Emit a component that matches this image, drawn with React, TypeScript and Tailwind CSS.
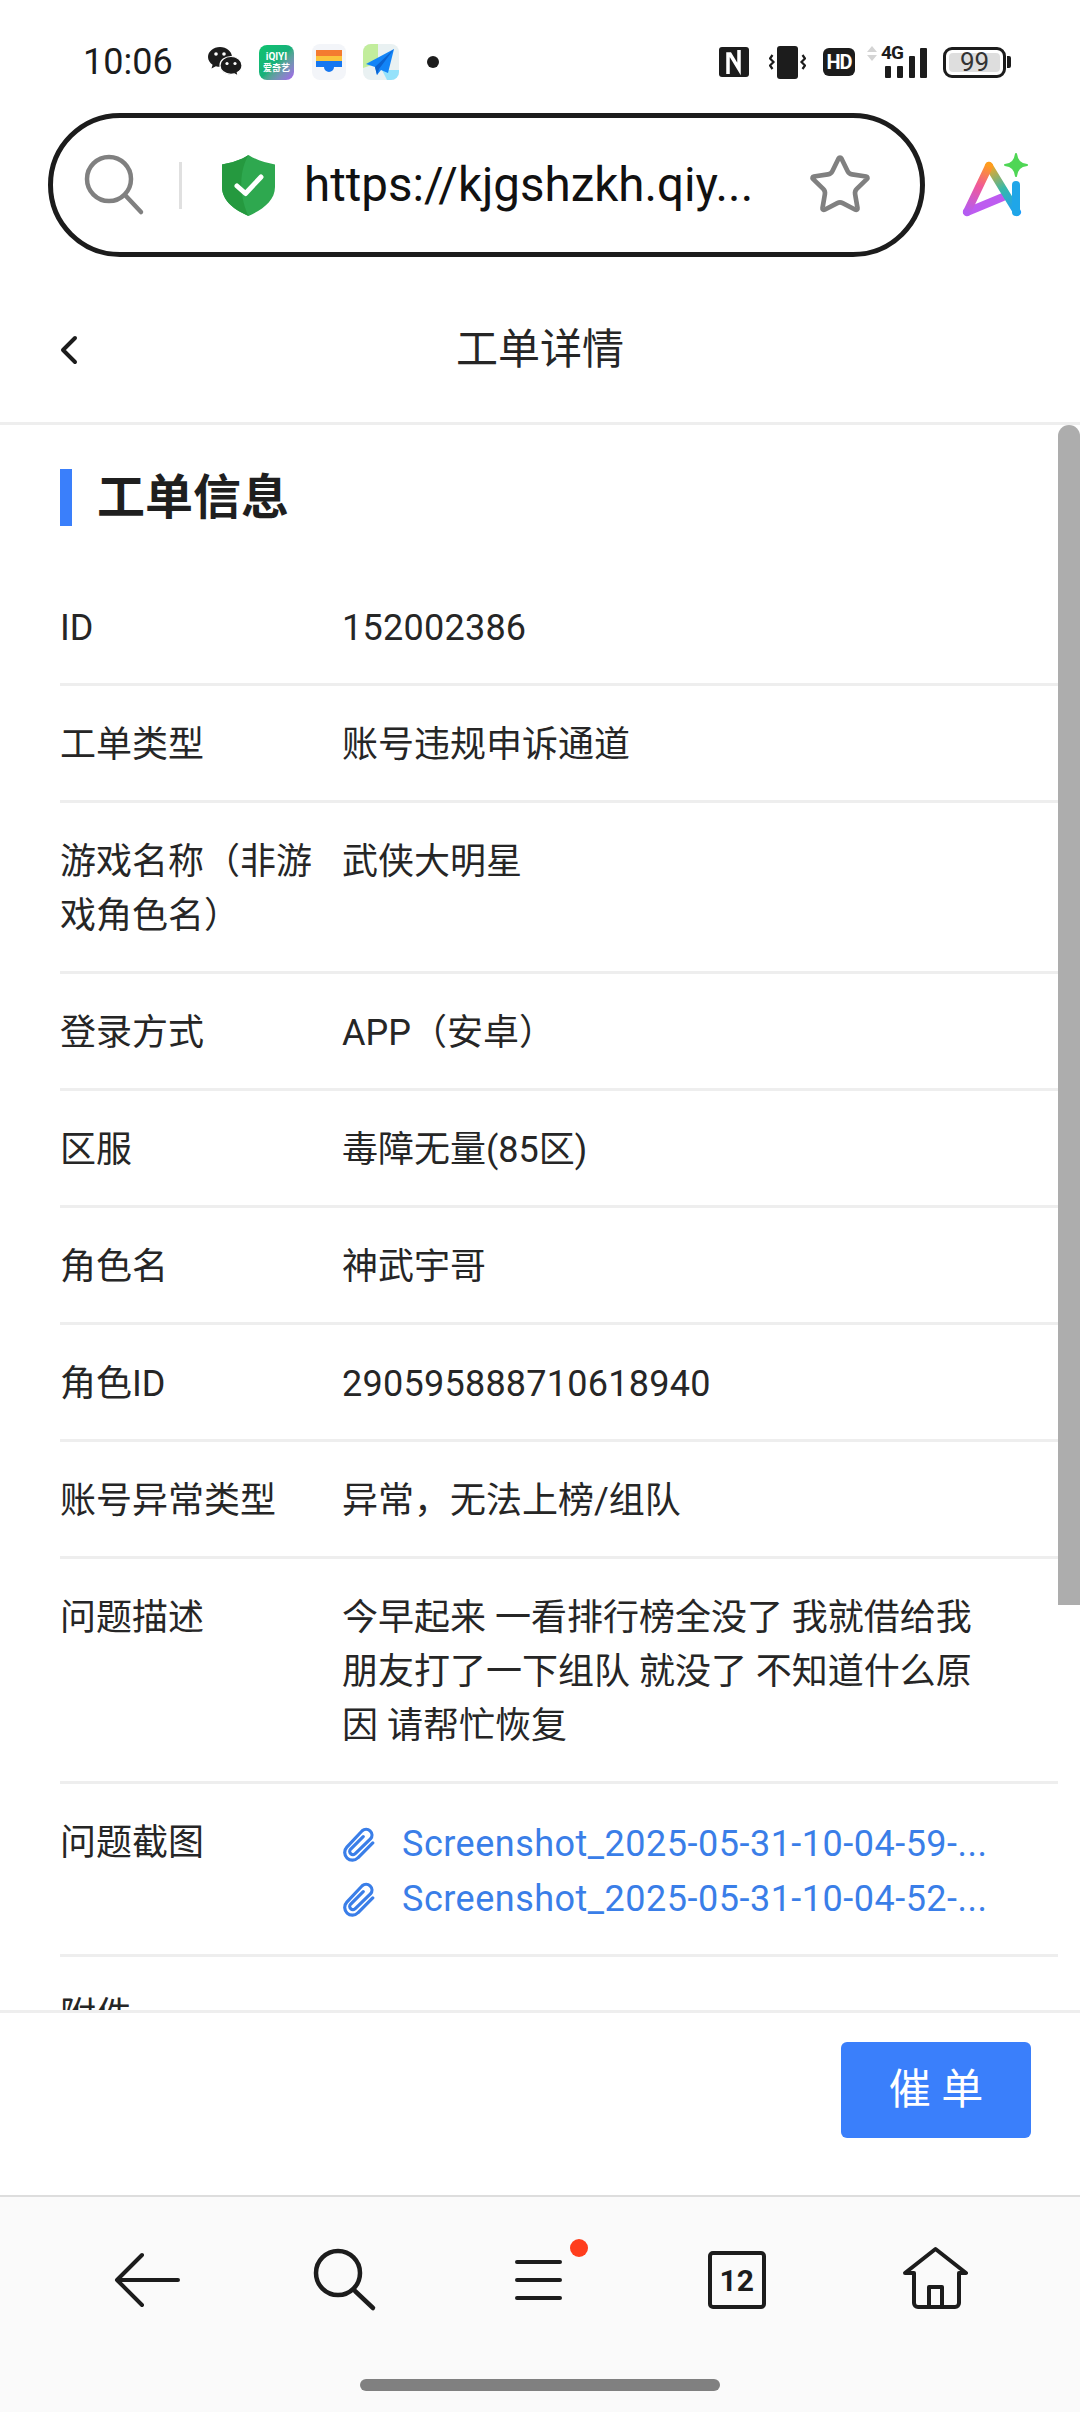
import React from 'react';
import { ChevronLeft, Star } from 'lucide-react';

type Row = { label: string; value: string; latin?: boolean };

const rows: Row[] = [
  { label: 'ID', value: '152002386', latin: true },
  { label: '工单类型', value: '账号违规申诉通道' },
  { label: '游戏名称（非游戏角色名）', value: '武侠大明星' },
  { label: '登录方式', value: 'APP（安卓）' },
  { label: '区服', value: '毒障无量(85区)' },
  { label: '角色名', value: '神武宇哥' },
  { label: '角色ID', value: '290595888710618940', latin: true },
  { label: '账号异常类型', value: '异常，无法上榜/组队' },
  { label: '问题描述', value: '今早起来 一看排行榜全没了 我就借给我朋友打了一下组队 就没了 不知道什么原因 请帮忙恢复' },
];

const files = ['Screenshot_2025-05-31-10-04-59-...', 'Screenshot_2025-05-31-10-04-52-...'];

const Clip = () => (
  <svg width="32" height="36" viewBox="0 0 30 34" fill="none" stroke="#3a7ee8" strokeWidth="3" strokeLinecap="round" className="shrink-0 ml-[1px]">
    <path d="M28 16 L14 30 a7.2 7.2 0 0 1 -10.5 -10 L18 4.500 a5.500 5.500 0 0 1 8 7.500 L11.500 26 a3 3 0 0 1 -4.500 -4 L19 10" />
  </svg>
);

const StatusBar = () => (
  <div className="h-[113px] pt-[11px] flex items-center shrink-0 box-border">
    <span className="ml-[83px] w-[90px] text-[36px] leading-none text-[#1c1c1c]">10:06</span>
    {/* wechat */}
    <svg width="34" height="30" viewBox="0 0 34 30" className="ml-[35px]">
      <path d="M12 0C5.400 0 0 4.500 0 10c0 3.200 1.800 5.900 4.600 7.700L3.500 21.500l4.400-2.300c1.300.4 2.700.6 4.100.6C18.600 19.800 24 15.500 24 10 24 4.500 18.600 0 12 0z" fill="#1c1c1c" />
      <path d="M23 9.500c-6 0-11 3.900-11 8.900 0 5 5 9 11 9 1.200 0 2.300-.2 3.400-.5l3.800 2.100-.9-3.400c2.800-1.700 4.700-4.300 4.700-7.200 0-5-4.900-8.900-11-8.900z" fill="#1c1c1c" stroke="#fff" strokeWidth="1.200" />
      <circle cx="8" cy="7" r="1.800" fill="#fff" />
      <circle cx="16" cy="7" r="1.800" fill="#fff" />
      <circle cx="19" cy="16.500" r="1.600" fill="#fff" />
      <circle cx="27" cy="16.500" r="1.600" fill="#fff" />
    </svg>
    {/* iqiyi */}
    <div className="ml-[17px] w-[35px] h-[35px] rounded-[8px] bg-gradient-to-br from-[#0fc46e] via-[#17b07a] to-[#a45cf0] flex flex-col items-center justify-center text-white font-bold leading-none">
      <span className="text-[10px] leading-[12px]">iQIYI</span>
      <span className="text-[9px] leading-[10px]">爱奇艺</span>
    </div>
    {/* wallet */}
    <svg width="34" height="36" viewBox="0 0 34 36" className="ml-[18px]">
      <rect width="34" height="36" rx="8" fill="#f3f5f9" />
      <rect x="4" y="6" width="26" height="6" fill="#f47b30" />
      <rect x="4" y="12" width="26" height="5" fill="#fbc43c" />
      <path d="M4 17h26v6h-8a5 5 0 0 1-10 0H4z" fill="#1677f0" />
    </svg>
    {/* map */}
    <svg width="36" height="36" viewBox="0 0 36 36" className="ml-[17px]">
      <rect width="36" height="36" rx="8" fill="#e9f1f2" />
      <path d="M8 0h7v19L0 24V8a8 8 0 0 1 8-8z" fill="#c2ed9c" />
      <path d="M19 26h17v2a8 8 0 0 1-8 8h-4z" fill="#95e2fb" />
      <path d="M31 5L3 20l9 3 2 8 4-5 7 3z" fill="#1284f7" />
      <path d="M31 5L12 23l2 8 2-6z" fill="#0b62cf" />
    </svg>
    <span className="ml-[28px] w-[12px] h-[12px] rounded-full bg-[#1c1c1c]" />

    <div className="ml-auto mr-[69px] flex items-center">
      {/* nfc */}
      <svg width="30" height="30" viewBox="0 0 30 30">
        <rect width="30" height="30" rx="3" fill="#1c1c1c" />
        <path d="M9 27V7h2l9 15V3" fill="none" stroke="#fff" strokeWidth="3.500" />
      </svg>
      {/* vibrate */}
      <svg width="37" height="33" viewBox="0 0 37 33" className="ml-[20px]">
        <rect x="8" y="0" width="21" height="33" rx="3" fill="#1c1c1c" />
        <path d="M3.500 9l-2.500 3.500L4.500 16 1 19.500 3.500 23" fill="none" stroke="#1c1c1c" strokeWidth="2.200" />
        <path d="M33.500 9l2.500 3.500L32.500 16l3.500 3.500L33.500 23" fill="none" stroke="#1c1c1c" strokeWidth="2.200" />
      </svg>
      <div className="ml-[17px] w-[32px] h-[28px] rounded-[6px] bg-[#1c1c1c] text-white text-[20px] font-bold leading-[28px] text-center tracking-[-1px]">HD</div>
      {/* signal */}
      <div className="relative ml-[12px] w-[60px] h-[32px]">
        <svg width="60" height="32" viewBox="0 0 60 32">
          <path d="M5 0l5 6H0zM5 15L0 9h10z" fill="#d4d4d4" />
          <rect x="18" y="20" width="6" height="12" rx="1" fill="#1c1c1c" />
          <rect x="30" y="20" width="6" height="12" rx="1" fill="#1c1c1c" />
          <rect x="42" y="10" width="6" height="22" rx="1" fill="#1c1c1c" />
          <rect x="53" y="2" width="7" height="30" rx="1" fill="#1c1c1c" />
        </svg>
        <span className="absolute left-[14px] top-[-3px] text-[19px] leading-[20px] font-bold text-[#1c1c1c] tracking-[-1px]">4G</span>
      </div>
      <div className="ml-[16px] w-[63px] h-[31px] box-border border-[3px] border-[#1c1c1c] rounded-[9px] p-[3px]">
        <div className="h-full rounded-[4px] bg-[#dedede] text-[26px] leading-[19px] text-center text-[#333]">99</div>
      </div>
      <span className="ml-[1px] w-[4px] h-[12px] rounded-r-[2px] bg-[#1c1c1c]" />
    </div>
  </div>
);

const UrlRow = () => (
  <div className="flex items-center shrink-0 h-[144px]">
    <div className="ml-[48px] w-[877px] h-[144px] box-border border-[5px] border-[#1c1c1c] rounded-full flex items-center">
      <svg width="62" height="62" viewBox="0 0 62 62" className="ml-[31px] shrink-0" fill="none" stroke="#808080" strokeWidth="4.500" strokeLinecap="round">
        <circle cx="25" cy="25" r="22" />
        <path d="M41 41L57 58" />
      </svg>
      <span className="ml-[33px] w-[3px] h-[47px] bg-[#e0e0e0] shrink-0" />
      <svg width="55" height="61" viewBox="0 0 55 61" className="ml-[39px] shrink-0">
        <path d="M27.500 0C35 5 45 8 54 9.500V32C54 46 41 55 27.500 61 14 55 1 46 1 32V9.500C10 8 20 5 27.500 0z" fill="#2ea84f" />
        <path d="M27.500 0C20 5 10 8 1 9.500V32C1 46 14 55 27.500 61 20 45 16 20 27.500 0z" fill="#25993f" />
        <path d="M16 31l8.500 7.500L40 22" fill="none" stroke="#fff" strokeWidth="5" strokeLinecap="round" strokeLinejoin="round" />
      </svg>
      <span className="ml-[28px] pt-[2px] w-[446px] shrink-0 text-[47.5px] leading-none text-[#111] whitespace-nowrap">https://kjgshzkh.qiy...</span>
      <Star size={66} strokeWidth={1.7} color="#808080" className="ml-[57px] shrink-0" />
    </div>
    {/* ai logo */}
    <svg width="110" height="90" viewBox="0 0 110 90" className="ml-[15px] shrink-0" fill="none" strokeWidth="8" strokeLinecap="round" strokeLinejoin="round">
      <defs>
        <linearGradient id="aiLeft" gradientUnits="userSpaceOnUse" x1="49" y1="25" x2="27" y2="72">
          <stop offset="0" stopColor="#ff9d1c" />
          <stop offset="0.45" stopColor="#f0589a" />
          <stop offset="1" stopColor="#b45cf2" />
        </linearGradient>
        <linearGradient id="aiRight" gradientUnits="userSpaceOnUse" x1="49" y1="25" x2="77" y2="72">
          <stop offset="0" stopColor="#ffa51c" />
          <stop offset="0.5" stopColor="#37b9a8" />
          <stop offset="1" stopColor="#1d9cfb" />
        </linearGradient>
      </defs>
      <path d="M27 72L63 57" stroke="#bd5cf0" />
      <path d="M77 72L49 26" stroke="url(#aiRight)" />
      <path d="M27 72L49 26" stroke="url(#aiLeft)" />
      <path d="M76 45V72" stroke="#1fa6e8" />
      <path d="M76 14C77 21 80 24 87 25 80 26 77 29 76 36 75 29 72 26 65 25 72 24 75 21 76 14z" fill="#4fd655" stroke="#4fd655" strokeWidth="2" />
    </svg>
  </div>
);

const InfoRow = ({ label, children }: { label: string; children: React.ReactNode }) => (
  <div className="flex border-b-[3px] border-[#eeeeee] pt-[32px] pb-[28px] text-[36px] leading-[54px] text-[#262626]">
    <div className="w-[282px] pr-[20px] shrink-0">{label}</div>
    <div className="w-[650px] min-w-0">{children}</div>
  </div>
);

const BottomNav = () => (
  <div className="shrink-0 h-[217px] box-border border-t-2 border-[#dddddd] bg-[#fafafa] flex flex-col">
    <div className="grid grid-cols-5 px-[48px] pt-[48px] h-[118px] box-border">
      <div className="flex justify-center">
        <svg width="70" height="70" viewBox="0 0 70 70" fill="none" stroke="#1c1c1c" strokeWidth="4" strokeLinecap="round" strokeLinejoin="round">
          <path d="M31 10L6 35l25 25M6 35h61" />
        </svg>
      </div>
      <div className="flex justify-center">
        <svg width="70" height="70" viewBox="0 0 70 70" fill="none" stroke="#1c1c1c" strokeWidth="4.500" strokeLinecap="round">
          <circle cx="30" cy="28" r="22" />
          <path d="M47 46L65 63" />
        </svg>
      </div>
      <div className="flex justify-center relative">
        <svg width="70" height="70" viewBox="0 0 70 70" fill="none" stroke="#1c1c1c" strokeWidth="4" strokeLinecap="round">
          <path d="M12 17h43M12 35h43M12 53h43" />
        </svg>
        <span className="absolute left-[128px] top-[-6px] w-[18px] h-[18px] rounded-full bg-[#ff3d1c]" />
      </div>
      <div className="flex justify-center">
        <div className="mt-[6px] w-[58px] h-[58px] box-border border-[4px] border-[#1c1c1c] rounded-[5px] text-[30px] leading-[52px] font-bold text-center text-[#1c1c1c]">12</div>
      </div>
      <div className="flex justify-center">
        <svg width="70" height="70" viewBox="0 0 70 70" fill="none" stroke="#1c1c1c" strokeWidth="4" strokeLinecap="round" strokeLinejoin="round">
          <path d="M6 28L36.500 4 67 28H60V58a4 4 0 0 1-4 4H19a4 4 0 0 1-4-4V28z" />
          <path d="M30 62V42H43V62" />
        </svg>
      </div>
    </div>
    <div className="mt-[64px] mx-auto w-[360px] h-[12px] rounded-full bg-[#808080]" />
  </div>
);

const App: React.FC = () => {
  return (
    <div className="w-[1080px] h-[2412px] flex flex-col overflow-hidden bg-white [font-family:Roboto,'Noto_Sans_CJK_SC',sans-serif]">
      <StatusBar />
      <UrlRow />

      {/* Page header */}
      <div className="shrink-0 h-[168px] box-border pt-[21px] border-b-[3px] border-[#eeeeee] relative flex items-center justify-center">
        <ChevronLeft size={48} strokeWidth={2} color="#1c1c1c" className="absolute left-[45px] top-[69px]" />
        <span className="text-[42px] leading-none text-[#262626]">工单详情</span>
      </div>

      {/* Scroll area */}
      <div className="relative flex-1 min-h-0 overflow-hidden">
        <div className="pl-[60px] pr-[22px]">
          <div className="pt-[44px] mb-[43px] flex items-center">
            <span className="w-[12px] h-[57px] bg-[#3a7ffb]" />
            <h1 className="ml-[25px] text-[48px] leading-none font-bold text-[#1f1f1f]">工单信息</h1>
          </div>
          {rows.map((r) => (
            <InfoRow key={r.label} label={r.label}>
              <span className={r.latin ? 'tracking-[0.25px]' : ''}>{r.value}</span>
            </InfoRow>
          ))}
          <InfoRow label="问题截图">
            {files.map((f) => (
              <div key={f} className="flex items-center h-[55px]">
                <Clip />
                <span className="ml-[27px] whitespace-nowrap tracking-[0.5px] text-[#3a7ee8]">{f}</span>
              </div>
            ))}
          </InfoRow>
          <InfoRow label="附件">
            <span />
          </InfoRow>
        </div>
        <div className="absolute right-0 top-0 w-[22px] h-[1180px] rounded-t-full rounded-b-[10px] bg-[#adadad]" />
      </div>

      {/* Action bar */}
      <div className="shrink-0 h-[185px] box-border border-t-[3px] border-[#eeeeee] flex justify-end items-start pt-[29px] pr-[49px]">
        <button className="w-[190px] h-[96px] rounded-[6px] bg-[#3a7ffb] text-white text-[42px] leading-none">催 单</button>
      </div>

      <BottomNav />
    </div>
  );
};

export default App;
